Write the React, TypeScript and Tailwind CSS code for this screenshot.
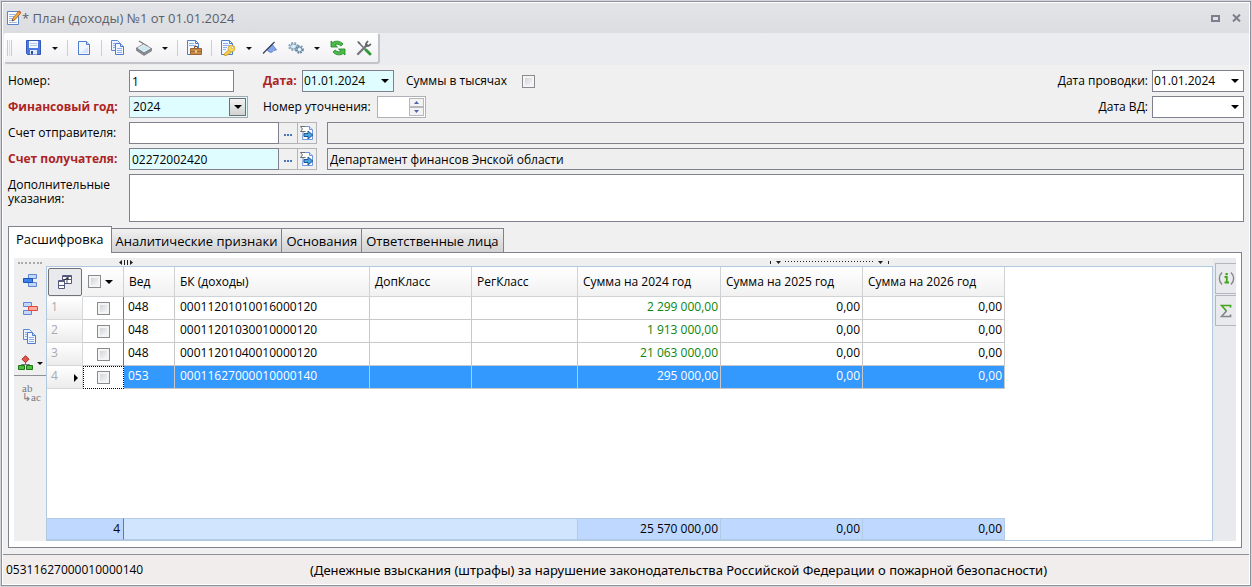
import type { ReactNode } from 'react'

interface BudgetRow {
  ved: string
  code: string
  sums: [string, string, string]
}

const rows: BudgetRow[] = [
  { ved: '048', code: '00011201010016000120', sums: ['2 299 000,00', '0,00', '0,00'] },
  { ved: '048', code: '00011201030010000120', sums: ['1 913 000,00', '0,00', '0,00'] },
  { ved: '048', code: '00011201040010000120', sums: ['21 063 000,00', '0,00', '0,00'] },
  { ved: '053', code: '00011627000010000140', sums: ['295 000,00', '0,00', '0,00'] },
]

const selectedIndex = 3

const columns = ['Вед', 'БК (доходы)', 'ДопКласс', 'РегКласс', 'Сумма на 2024 год', 'Сумма на 2025 год', 'Сумма на 2026 год']

const tabs = ['Расшифровка', 'Аналитические признаки', 'Основания', 'Ответственные лица']

const field = 'h-[22px] border border-[#7f828e] px-[2px] outline-none'

// ---------- icons ----------

function Svg({ children, size = 16 }: { children: ReactNode; size?: number }) {
  return (
    <svg width={size} height={size} viewBox="0 0 16 16" fill="none" aria-hidden="true" className="shrink-0">
      {children}
    </svg>
  )
}

function Caret() {
  return (
    <svg width="8" height="4" viewBox="0 0 8 4" aria-hidden="true" className="shrink-0">
      <path d="M0 0h8L4 4z" fill="#000" />
    </svg>
  )
}

function SmallCaret() {
  return (
    <svg width="6" height="3" viewBox="0 0 6 3" aria-hidden="true" className="shrink-0">
      <path d="M0 0h6L3 3z" fill="#111" />
    </svg>
  )
}

function EditDocIcon() {
  return (
    <Svg>
      <path d="M1.500 1.500h11v13h-11z" fill="#fff" stroke="#5b84c8" />
      <path d="M3 4.500h6M3 6.500h5M3 8.500h4M3 10.500h3M3 12.500h8" stroke="#9db9e8" />
      <path d="M6 11l1-3L12.500 1.500l2 1.800L9 9.800z" fill="#f3a63a" stroke="#9b6422" strokeWidth=".8" />
      <path d="M12.300 1.500l1-1 2 1.800-.9 1z" fill="#d9534a" />
      <path d="M6 11l.6-1.600 1 .9z" fill="#222" />
    </Svg>
  )
}

function SaveIcon() {
  return (
    <Svg>
      <path d="M.5 .5h14v14h-13l-1-1z" fill="#4a7be0" stroke="#3159b5" />
      <path d="M3 1h9v7H3z" fill="#f4f8fe" />
      <path d="M4 3.500h7M4 5.500h7" stroke="#b7c8ea" />
      <path d="M4 10h7v4.500H4z" fill="#e3e9f6" />
      <path d="M5 11h2v3.500H5z" fill="#2a50a8" />
    </Svg>
  )
}

function NewDocIcon() {
  return (
    <Svg>
      <path d="M2.500 1.500h8l3 3v10h-11z" fill="#f1f6ff" stroke="#4f7dca" />
      <path d="M10.500 1.500v3h3" fill="#c7dafa" stroke="#4f7dca" />
      <path d="M4 13h8V7z" fill="#d7e5fc" />
    </Svg>
  )
}

function CopyIcon() {
  return (
    <Svg>
      <path d="M1.500 .5h6l2 2v8h-8z" fill="#eaf2ff" stroke="#5b88d4" />
      <path d="M3 3.500h3M3 5.500h3M3 7.500h3" stroke="#8fb1ea" />
      <path d="M5.500 3.500h5l3 3v8h-8z" fill="#f1f6ff" stroke="#4f7dca" />
      <path d="M10.500 3.500v3h3" stroke="#4f7dca" fill="#c7dafa" />
      <path d="M7 8.500h5M7 10.500h5M7 12.500h5" stroke="#8fb1ea" />
    </Svg>
  )
}

function ScannerIcon() {
  return (
    <Svg>
      <path d="M3 1l9 5.500" stroke="#777" strokeWidth="1.300" />
      <path d="M.5 8L7.500 4l8 4.500-7.500 4.500z" fill="#eaf2f5" stroke="#7d8387" strokeWidth=".8" />
      <path d="M3 8.200L7.500 5.500l5.500 3L8.300 11.300z" fill="#cbe7f3" />
      <path d="M.5 8v2.500L8 15.500l7.500-4.500V8.500L8 13z" fill="#8b9195" stroke="#666b6e" strokeWidth=".6" />
    </Svg>
  )
}

function BriefcaseDocIcon() {
  return (
    <Svg>
      <path d="M1.500 .5h8l3 3v11h-11z" fill="#f1f6ff" stroke="#4f7dca" />
      <path d="M9.500 .5v3h3" stroke="#4f7dca" />
      <path d="M3 3.500h5M3 5.500h7" stroke="#8fb1ea" />
      <path d="M8.500 8v-1.500h3V8" stroke="#80501c" />
      <path d="M4.500 8.500h11v6h-11z" fill="#c58a49" stroke="#9a6530" />
      <path d="M5 11.500h10" stroke="#a46d36" />
      <path d="M9 10.500h2v2H9z" fill="#f7dc8a" />
    </Svg>
  )
}

function KeyDocIcon() {
  return (
    <Svg>
      <path d="M1.500 .5h8l3 3v11h-11z" fill="#f1f6ff" stroke="#4f7dca" />
      <path d="M9.500 .5v3h3" stroke="#4f7dca" />
      <path d="M3 3.500h5M3 5.500h7M3 7.500h4M3 9.500h3" stroke="#8fb1ea" />
      <path d="M9 9.500l-4.500 4v2h2.500l1-1.500h1.500l2-2z" fill="#f4cf45" stroke="#c9a02c" strokeWidth=".8" />
      <circle cx="11.500" cy="8.500" r="3.300" fill="#f9dc62" stroke="#c9a02c" strokeWidth=".8" />
      <circle cx="12.400" cy="7.600" r="1.100" fill="#fff" stroke="#b78f1c" strokeWidth=".5" />
    </Svg>
  )
}

function FlagIcon() {
  return (
    <Svg>
      <path d="M10 4l4.500 6-2.500.3-2 2-3-.3L5 9.500z" fill="#86a5e8" stroke="#5578c4" strokeWidth=".8" />
      <path d="M1 13.500L12.500 2" stroke="#3a4257" strokeWidth="1.200" />
    </Svg>
  )
}

function GearsIcon() {
  return (
    <Svg>
      <ellipse cx="5.500" cy="6.500" rx="4.400" ry="3.600" stroke="#85a3b9" strokeWidth="1.800" strokeDasharray="1.900 1.300" />
      <ellipse cx="5.500" cy="6.500" rx="3.200" ry="2.500" fill="#cfe2ef" stroke="#85a3b9" />
      <circle cx="5.500" cy="6.500" r="1" fill="#fff" />
      <circle cx="11.500" cy="9.500" r="3.500" stroke="#6387a2" strokeWidth="1.700" strokeDasharray="1.700 1.200" />
      <circle cx="11.500" cy="9.500" r="2.500" fill="#cfe2ef" stroke="#6387a2" />
      <circle cx="11.500" cy="9.500" r="1" fill="#fff" />
    </Svg>
  )
}

function RefreshIcon() {
  return (
    <Svg>
      <path d="M1 7V1l1.800 1.500C5.500.5 10 .5 13 4L11 6C9 4 6.500 3.800 5 4.800L7.500 7z" fill="#4dbb4a" stroke="#1c8424" strokeWidth=".8" />
      <path d="M15 9v6l-1.800-1.500C10.500 15.500 6 15.500 3 12l2-2c2 2 4.500 2.200 6 1.200L8.500 9z" fill="#4dbb4a" stroke="#1c8424" strokeWidth=".8" />
    </Svg>
  )
}

function ToolsIcon() {
  return (
    <Svg>
      <path d="M2 2l10 10" stroke="#6a6d71" strokeWidth="1.500" />
      <path d="M1 1l3 1 .5 2L3 4z" fill="#6a6d71" />
      <path d="M14 14l-4-4" stroke="#2f9a38" strokeWidth="3" strokeLinecap="round" />
      <path d="M2 14L11 5" stroke="#77797d" strokeWidth="2.400" strokeLinecap="round" />
      <path d="M12 1L10 3.500v2.500h2.500L15 4" stroke="#5e6165" strokeWidth="1.700" />
    </Svg>
  )
}

function OpenCardIcon() {
  return (
    <Svg>
      <path d="M4.500 1.500h6l3 3v10h-10z" fill="#fff" stroke="#6e96da" />
      <path d="M10.500 1.500v3h3" fill="#d5e3fa" stroke="#6e96da" />
      <path d="M6.500 1.500h-5l2 2.500-2 2.500h5" stroke="#6d6d6d" fill="#fff" />
      <path d="M5 8.500h4V6l4.800 4-4.800 4v-2.500H5z" fill="#4da3dd" stroke="#1c5596" />
    </Svg>
  )
}

function AddRowIcon() {
  return (
    <Svg>
      <path d="M6.500 1.500h8v4h-8zM6.500 9.500h8v4h-8z" fill="#c3d7fa" stroke="#5f87d2" />
      <path d="M1.500 5.500h9v4h-9z" fill="#3b83ea" stroke="#1f55b0" />
    </Svg>
  )
}

function DeleteRowIcon() {
  return (
    <Svg>
      <path d="M1.500 1.500h8v4h-8zM1.500 9.500h8v4h-8z" fill="#c3d7fa" stroke="#5f87d2" />
      <path d="M6.500 5.500h9v4h-9z" fill="#ffaaa0" stroke="#e8453a" />
    </Svg>
  )
}

function ShapesIcon() {
  return (
    <Svg>
      <path d="M7.500 7v3M3.500 11V9.500h8V11" stroke="#777" />
      <path d="M7.500 .7L11 4.200 7.500 7.700 4 4.200z" fill="#e2564c" stroke="#a92a22" />
      <path d="M.5 10.500h6v4h-6zM8.500 10.500h6v4h-6z" fill="#4cc13f" stroke="#21761a" />
    </Svg>
  )
}

function GridViewIcon() {
  return (
    <Svg>
      <path d="M5.500 1.500h9v8h-9z" fill="#fff" stroke="#55597c" />
      <path d="M5 2.500h10M5.500 5.500h9M10 2v7" stroke="#55597c" />
      <path d="M1.500 6.500h6v8h-6z" fill="#fff" stroke="#55597c" />
      <path d="M1 7.500h7M1 11.500h7" stroke="#55597c" />
      <path d="M7 6l4-2M11 3v3" stroke="#222" />
    </Svg>
  )
}

// ---------- small controls ----------

function ToolButton({ label, children }: { label: string; children: ReactNode }) {
  return (
    <button type="button" aria-label={label} className="flex h-6 w-[26px] items-center justify-center">
      {children}
    </button>
  )
}

function MenuButton({ label }: { label: string }) {
  return (
    <button type="button" aria-label={label} className="flex h-6 w-4 items-center justify-center">
      <SmallCaret />
    </button>
  )
}

function Separator() {
  return (
    <div className="flex w-2 justify-center">
      <div className="h-4 w-px bg-[#cdced3]" />
    </div>
  )
}

function CheckBox({ id, label }: { id?: string; label?: string }) {
  return (
    <input
      id={id}
      type="checkbox"
      aria-label={label}
      className="block size-[13px] shrink-0 appearance-none border border-[#8a8b8e] bg-linear-to-br from-[#c9ccd1] to-white shadow-[inset_0_0_0_2px_#f4f4f4] checked:bg-[#4d7ec8]"
    />
  )
}

function DateField({ id, value, className }: { id: string; value: string; className: string }) {
  return (
    <div className={`flex h-[22px] w-[92px] items-center border border-[#7f828e] ${className}`}>
      <input id={id} defaultValue={value} className="w-full min-w-0 bg-transparent pl-px outline-none" />
      <button type="button" aria-label="Открыть календарь" className="flex h-full w-4 shrink-0 items-center justify-center">
        <Caret />
      </button>
    </div>
  )
}

function AccountField({ id, value, name, className }: { id: string; value: string; name: string; className: string }) {
  return (
    <div className="flex flex-1">
      <input id={id} defaultValue={value} className={`${field} w-[150px] ${className}`} />
      <button type="button" aria-label="Выбрать" className="flex h-[22px] w-[18px] items-center justify-center gap-px border-y border-[#b4b4b6] pt-1">
        <span className="size-[2px] bg-[#4a75b8]" />
        <span className="size-[2px] bg-[#4a75b8]" />
        <span className="size-[2px] bg-[#4a75b8]" />
      </button>
      <button type="button" aria-label="Открыть карточку" className="mr-[10px] flex h-[22px] w-5 items-center justify-center border border-[#b4b4b6]">
        <OpenCardIcon />
      </button>
      <input readOnly aria-label="Наименование" value={name} className={`${field} min-w-0 flex-1 bg-[#efefef]`} />
    </div>
  )
}

function Columns() {
  return (
    <colgroup>
      <col className="w-9" />
      <col className="w-[41px]" />
      <col className="w-[51px]" />
      <col className="w-[195px]" />
      <col className="w-[102px]" />
      <col className="w-[106px]" />
      <col className="w-[143px]" />
      <col className="w-[142px]" />
      <col className="w-[142px]" />
    </colgroup>
  )
}

// ---------- window parts ----------

function TitleBar() {
  return (
    <header className="flex h-[30px] items-center bg-linear-to-b from-[#e3e4e8] to-[#dcdde1] px-[3px]">
      <EditDocIcon />
      <h1 className="flex-1 text-[13px] text-[#5c5f6b]">* План (доходы) №1 от 01.01.2024</h1>
      <button type="button" aria-label="Развернуть" className="mr-3 h-[7px] w-[9px] border-2 border-[#7b7e8c]" />
      <button type="button" aria-label="Закрыть" className="mr-[5px]">
        <svg width="9" height="8" viewBox="0 0 9 8" aria-hidden="true">
          <path d="M1 .5l7 7M8 .5l-7 7" stroke="#7b7e8c" strokeWidth="2" />
        </svg>
      </button>
    </header>
  )
}

function Toolbar() {
  return (
    <div className="flex h-8 items-start bg-[#ebecf0] px-px">
      <div className="flex h-[31px] items-center rounded-[3px] border border-r-2 border-b-2 border-[#c3c4c9] border-t-white border-l-white bg-linear-to-b from-white to-[#f1f1f4] pr-px">
        <div className="mr-[9px] ml-[2px] flex gap-px">
          <div className="h-4 w-px bg-[#c9cad0]" />
          <div className="h-4 w-px bg-[#dfe0e4]" />
          <div className="h-4 w-px bg-[#c9cad0]" />
        </div>
        <ToolButton label="Сохранить"><SaveIcon /></ToolButton>
        <MenuButton label="Варианты сохранения" />
        <Separator />
        <ToolButton label="Создать"><NewDocIcon /></ToolButton>
        <Separator />
        <ToolButton label="Копировать"><CopyIcon /></ToolButton>
        <ToolButton label="Сканировать"><ScannerIcon /></ToolButton>
        <MenuButton label="Варианты сканирования" />
        <Separator />
        <ToolButton label="Дело"><BriefcaseDocIcon /></ToolButton>
        <Separator />
        <ToolButton label="Подписать"><KeyDocIcon /></ToolButton>
        <MenuButton label="Варианты подписи" />
        <ToolButton label="Отметить"><FlagIcon /></ToolButton>
        <ToolButton label="Обработка"><GearsIcon /></ToolButton>
        <MenuButton label="Варианты обработки" />
        <ToolButton label="Обновить"><RefreshIcon /></ToolButton>
        <ToolButton label="Настройки"><ToolsIcon /></ToolButton>
      </div>
    </div>
  )
}

function PlanForm() {
  return (
    <form className="flex flex-col gap-1 px-[5px] pt-[5px]">
      <div className="flex items-center">
        <label htmlFor="number" className="w-[121px]">Номер:</label>
        <div className="w-[134px]">
          <input id="number" defaultValue="1" className={`${field} block w-[105px] bg-white`} />
        </div>
        <label htmlFor="date" className="w-[39px] font-bold text-[#ac2424]">Дата:</label>
        <DateField id="date" value="01.01.2024" className="bg-[#dffdfe]" />
        <label htmlFor="thousands" className="mr-[15px] ml-3">Суммы в тысячах</label>
        <CheckBox id="thousands" />
        <label htmlFor="postingDate" className="mr-1 ml-auto">Дата проводки:</label>
        <DateField id="postingDate" value="01.01.2024" className="bg-white" />
      </div>
      <div className="flex items-center">
        <label htmlFor="year" className="w-[121px] font-bold text-[#ac2424]">Финансовый год:</label>
        <div className="w-[134px]">
          <div className="relative w-[119px]">
            <select id="year" defaultValue="2024" className="block h-[22px] w-full appearance-none border border-[#a5a8ae] bg-[#dffdfe] px-[3px] outline-none">
              <option>2024</option>
              <option>2025</option>
            </select>
            <span className="pointer-events-none absolute top-[2px] right-[2px] flex h-[18px] w-[17px] items-center justify-center border border-[#707070] bg-linear-to-b from-[#f3f3f3] to-[#d2d2d2]">
              <Caret />
            </span>
          </div>
        </div>
        <label htmlFor="revision" className="w-[114px]">Номер уточнения:</label>
        <div className="flex h-[22px] w-[49px] border border-[#b0b1b6] bg-white p-px">
          <input id="revision" className="min-w-0 flex-1 px-px outline-none" />
          <div className="flex w-[15px] flex-col">
            <button type="button" aria-label="Больше" className="flex flex-1 items-center justify-center border border-[#b7b8bd] bg-[#f3f3f3]">
              <svg width="5" height="3" viewBox="0 0 5 3" aria-hidden="true"><path d="M0 3h5L2.500 0z" fill="#4d66ab" /></svg>
            </button>
            <button type="button" aria-label="Меньше" className="flex flex-1 items-center justify-center border border-[#b7b8bd] bg-[#f3f3f3]">
              <svg width="5" height="3" viewBox="0 0 5 3" aria-hidden="true"><path d="M0 0h5L2.500 3z" fill="#4d66ab" /></svg>
            </button>
          </div>
        </div>
        <label htmlFor="vdDate" className="mr-1 ml-auto">Дата ВД:</label>
        <DateField id="vdDate" value="" className="bg-white" />
      </div>
      <div className="flex items-center">
        <label htmlFor="sender" className="w-[121px]">Счет отправителя:</label>
        <AccountField id="sender" value="" name="" className="bg-white" />
      </div>
      <div className="flex items-center">
        <label htmlFor="receiver" className="w-[121px] font-bold text-[#ac2424]">Счет получателя:</label>
        <AccountField id="receiver" value="02272002420" name="Департамент финансов Энской области" className="bg-[#dffdfe]" />
      </div>
      <div className="flex">
        <label htmlFor="notes" className="w-[121px] pt-1 leading-[14px]">Дополнительные указания:</label>
        <textarea id="notes" className="block h-12 flex-1 resize-none border border-[#7f828e] bg-white px-[2px] outline-none" />
      </div>
    </form>
  )
}

function GridTools() {
  return (
    <div className="flex w-8 shrink-0 flex-col items-start bg-[#efefef] pt-1">
      <div className="mb-[3px] ml-1 w-6 border-t-2 border-dotted border-[#a9a9ad]" />
      <button type="button" aria-label="Добавить строку" className="flex h-7 w-8 items-center justify-center"><AddRowIcon /></button>
      <button type="button" aria-label="Удалить строку" className="flex h-7 w-8 items-center justify-center"><DeleteRowIcon /></button>
      <button type="button" aria-label="Копировать строку" className="flex h-7 w-8 items-center justify-center"><CopyIcon /></button>
      <button type="button" aria-label="Группировка" className="flex h-[25px] w-8 items-center gap-[3px] border-b border-[#8f9095] pl-1">
        <ShapesIcon />
        <SmallCaret />
      </button>
      <button type="button" aria-label="Заменить" className="w-8 pt-2 pl-2 text-left font-['Liberation_Serif',serif] text-[11px] leading-[9px] whitespace-pre-line text-[#77787c]">
        {'ab\n↳ac'}
      </button>
    </div>
  )
}

function BudgetTable() {
  return (
    <table className="w-[958px] table-fixed border-separate border-spacing-0">
      <Columns />
      <thead>
        <tr className="h-[30px] bg-linear-to-b from-white to-[#f1f1f2]">
          <th className="p-px">
            <button type="button" aria-label="Вид таблицы" className="flex h-[28px] w-full items-center justify-center rounded-[2px] border border-[#707276] bg-[#e9eaed]">
              <GridViewIcon />
            </button>
          </th>
          <th className="border-r border-b border-[#cfd3d5] p-0">
            <div className="flex items-center gap-1 pl-[5px]">
              <CheckBox label="Выбрать все строки" />
              <Caret />
            </div>
          </th>
          {columns.map((name) => (
            <th key={name} className="border-r border-b border-[#cfd3d5] bg-linear-to-b from-white to-[#f1f1f2] p-0 pl-[5px] text-left font-normal whitespace-nowrap">
              {name}
            </th>
          ))}
        </tr>
      </thead>
      <tbody>
        {rows.map((row, i) => {
          const selected = i === selectedIndex
          return (
            <tr key={row.code} className={`h-[23px] ${selected ? 'bg-[#3399ff] text-white' : 'bg-white'}`}>
              <td className="border-r border-b border-[#d5d8da] bg-linear-to-b from-white to-[#ececed] p-0 pb-[2px] pl-1 text-[#a9aaad]">
                <div className="flex items-center justify-between pr-1">
                  {i + 1}
                  {selected && (
                    <svg width="4" height="8" viewBox="0 0 4 8" aria-hidden="true" className="mt-1"><path d="M0 0v8l4-4z" fill="#000" /></svg>
                  )}
                </div>
              </td>
              <td className={`p-0 ${selected ? 'border border-dotted border-black bg-white' : 'border-r border-b border-r-[#777] border-b-[#c8c8c8]'}`}>
                <div className="flex justify-center">
                  <CheckBox label={`Строка ${i + 1}`} />
                </div>
              </td>
              <td className="border-r border-b border-[#c8c8c8] p-0 pb-[2px] pl-1">{row.ved}</td>
              <td className="border-r border-b border-[#c8c8c8] p-0 pb-[2px] pl-[5px]">{row.code}</td>
              <td className="border-r border-b border-[#c8c8c8] p-0" />
              <td className="border-r border-b border-[#c8c8c8] p-0" />
              {row.sums.map((sum, n) => (
                <td key={n} className={`border-r border-b border-[#c8c8c8] p-0 pr-[2px] pb-[2px] text-right ${n === 0 && !selected ? 'text-[#0b850b]' : ''}`}>
                  {sum}
                </td>
              ))}
            </tr>
          )
        })}
      </tbody>
    </table>
  )
}

function TotalsTable() {
  return (
    <table className="w-[958px] table-fixed border-separate border-spacing-0">
      <Columns />
      <tbody>
        <tr className="h-[22px] bg-[#bfd8ff]">
          <td colSpan={2} className="border-y border-r border-y-[#b3cbe4] border-r-[#777] p-0 pr-[3px] text-right">4</td>
          <td colSpan={4} className="border-y border-r border-[#b3cbe4] bg-[#d2e5ff] p-0" />
          <td className="border-y border-r border-[#b3cbe4] p-0 pr-[2px] text-right">25 570 000,00</td>
          <td className="border-y border-r border-[#b3cbe4] p-0 pr-[2px] text-right">0,00</td>
          <td className="border-y border-r border-[#b3cbe4] p-0 pr-[2px] text-right">0,00</td>
        </tr>
      </tbody>
    </table>
  )
}

function GridSplitter() {
  return (
    <div className="flex h-2 items-center bg-[#efefef] pl-[73px]">
      <svg width="14" height="5" viewBox="0 0 14 5" aria-hidden="true">
        <path d="M3 0v5L0 2.500zM11 0v5l3-2.500z" fill="#222" />
        <path d="M5.500 0v5M8.500 0v5" stroke="#222" />
      </svg>
      <svg width="120" height="5" viewBox="0 0 120 5" aria-hidden="true" className="ml-[637px]">
        <path d="M.5 1v3M118.500 1v3" stroke="#222" />
        <path d="M6 1h5L8.500 4zM108 1h5l-2.500 3z" fill="#222" />
        <path d="M15 1.500h89" stroke="#222" strokeDasharray="1 2" />
      </svg>
    </div>
  )
}

function SideTabs() {
  return (
    <div className="w-[23px] shrink-0 bg-[#e9eaee] pt-[5px] pl-[2px]">
      <button type="button" aria-label="Информация" className="mb-px flex h-[31px] w-full items-center justify-center border border-r-0 border-[#b5b6bf]">
        <svg width="17" height="17" viewBox="0 0 17 17" fill="none" aria-hidden="true">
          <path d="M4 2.500C.5 6 .5 11 4 14.500M13 2.500c3.500 3.500 3.500 8.500 0 12" stroke="#85868a" strokeWidth="1.400" />
          <path d="M6.500 7h2.300v5.200M6.500 12.500h4.500" stroke="#43a51c" strokeWidth="1.800" />
          <path d="M7.500 3h2.300v2.200H7.500z" fill="#43a51c" />
        </svg>
      </button>
      <button type="button" aria-label="Итоги" className="flex h-[31px] w-full items-center justify-center border border-r-0 border-[#b5b6bf]">
        <svg width="12" height="14" viewBox="0 0 12 14" fill="none" aria-hidden="true">
          <path d="M10.500 3.500V1.500H1.500L6.500 7" stroke="#43a51c" strokeWidth="1.700" />
          <path d="M6.500 7l-5 5.500h9v-2" stroke="#85868a" strokeWidth="1.700" />
        </svg>
      </button>
    </div>
  )
}

export default function App() {
  return (
    <div className="flex min-h-screen flex-col bg-[#d3d4d9] p-px font-['Open_Sans','Noto_Sans',sans-serif] text-[12px] leading-4 text-black">
      <div className="flex flex-1 flex-col border border-[#8e919d] bg-[#f0f0f0]">
        <div className="flex flex-1 flex-col border border-white">
          <TitleBar />
          <Toolbar />
          <PlanForm />

          <div className="flex flex-1 flex-col px-[5px] pt-1 pb-[6px]">
            <div role="tablist" className="flex items-end">
              {tabs.map((tab, i) => (
                <button
                  key={tab}
                  type="button"
                  role="tab"
                  aria-selected={i === 0}
                  className={
                    i === 0
                      ? 'relative -mb-px h-[27px] border border-b-0 border-[#80828d] bg-white px-[7px] pb-[2px] text-[13px]'
                      : 'h-6 border border-b-0 border-l-0 border-[#80828d] bg-linear-to-b from-[#f1f1f1] to-[#d2d2d4] px-1 text-[13px]'
                  }
                >
                  {tab}
                </button>
              ))}
            </div>
            <div className="mr-[2px] flex flex-1 border border-[#80828d] bg-white p-[5px] pb-[6px]">
              <GridTools />
              <div className="flex min-w-0 flex-1 flex-col">
                <GridSplitter />
                <div className="flex flex-1 flex-col justify-between border border-[#b0c9e0] bg-white">
                  <BudgetTable />
                  <TotalsTable />
                </div>
              </div>
              <SideTabs />
            </div>
          </div>

          <footer className="flex h-[30px] items-center border-t border-[#8f9095] bg-[#f1eded] px-[3px]">
            <span className="w-[304px]">05311627000010000140</span>
            <span className="font-['Noto_Sans',sans-serif] text-[13px]">(Денежные взыскания (штрафы) за нарушение законодательства Российской Федерации о пожарной безопасности)</span>
          </footer>
        </div>
      </div>
    </div>
  )
}
